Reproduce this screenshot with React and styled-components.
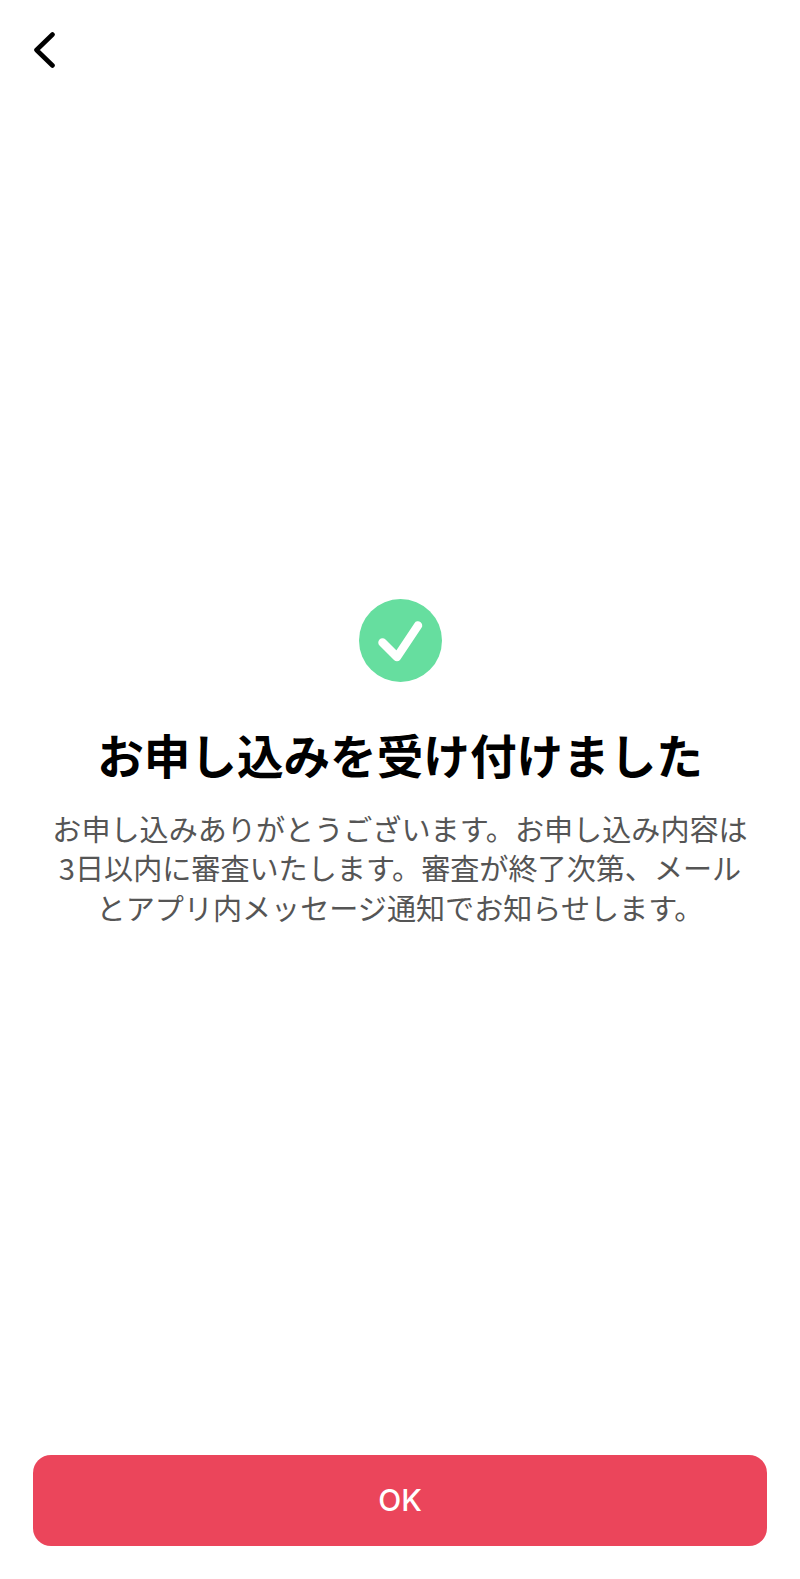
import React from "react";
import styled, { createGlobalStyle } from "styled-components";

const GlobalStyle = createGlobalStyle`
  html, body {
    margin: 0;
    padding: 0;
    background: #fff;
  }
  * {
    box-sizing: border-box;
  }
`;

const Page = styled.div`
  width: 800px;
  height: 1579px;
  display: flex;
  flex-direction: column;
  font-family: "Noto Sans CJK JP", "Noto Sans", sans-serif;
  background: #fff;
`;

const Header = styled.header`
  height: 100px;
  padding: 32px 0 0 33px;
`;

const BackBtn = styled.button`
  display: block;
  width: 24px;
  height: 36px;
  padding: 0;
  border: 0;
  background: none;
`;

const Main = styled.main`
  flex: 1;
  display: flex;
  flex-direction: column;
  align-items: center;
  padding: 499px 40px 0;
`;

const CheckIcon = styled.svg`
  display: block;
  width: 83px;
  height: 83px;
`;

const Title = styled.h1`
  margin: 38px 0 0;
  font-size: 46.6px;
  line-height: 68px;
  font-weight: 700;
  color: #000;
  white-space: nowrap;
`;

const Desc = styled.p`
  width: 705px;
  margin: 21px 0 0;
  font-size: 29.1px;
  line-height: 39.3px;
  font-weight: 400;
  color: #555;
  text-align: center;
`;

const Footer = styled.footer`
  padding: 0 33px 33px;
`;

const OkBtn = styled.button`
  display: block;
  width: 100%;
  height: 91px;
  padding: 0 0 2px;
  border: 0;
  border-radius: 18px;
  background: #eb455b;
  color: #fff;
  font-family: "Inter", "Noto Sans", sans-serif;
  font-size: 30px;
  font-weight: 500;
`;

const App = () => {
  return (
    <>
      <GlobalStyle />
      <Page>
        <Header>
          <BackBtn aria-label="戻る">
            <svg width="24" height="36" viewBox="0 0 24 36" fill="none">
              <path
                d="M19.5 2.5 L3.5 18 L19.5 33.5"
                stroke="#000"
                strokeWidth="4.6"
                strokeLinecap="round"
                strokeLinejoin="round"
              />
            </svg>
          </BackBtn>
        </Header>
        <Main>
          <CheckIcon viewBox="0 0 83 83">
            <circle cx="41.5" cy="41.5" r="41.5" fill="#66de9f" />
            <path
              d="M23.5 43.5 L38 58 L59 26.5"
              fill="none"
              stroke="#fff"
              strokeWidth="8.5"
              strokeLinecap="round"
              strokeLinejoin="round"
            />
          </CheckIcon>
          <Title>お申し込みを受け付けました</Title>
          <Desc>
            お申し込みありがとうございます。お申し込み内容は3日以内に審査いたします。審査が終了次第、メールとアプリ内メッセージ通知でお知らせします。
          </Desc>
        </Main>
        <Footer>
          <OkBtn>OK</OkBtn>
        </Footer>
      </Page>
    </>
  );
};

export default App;
